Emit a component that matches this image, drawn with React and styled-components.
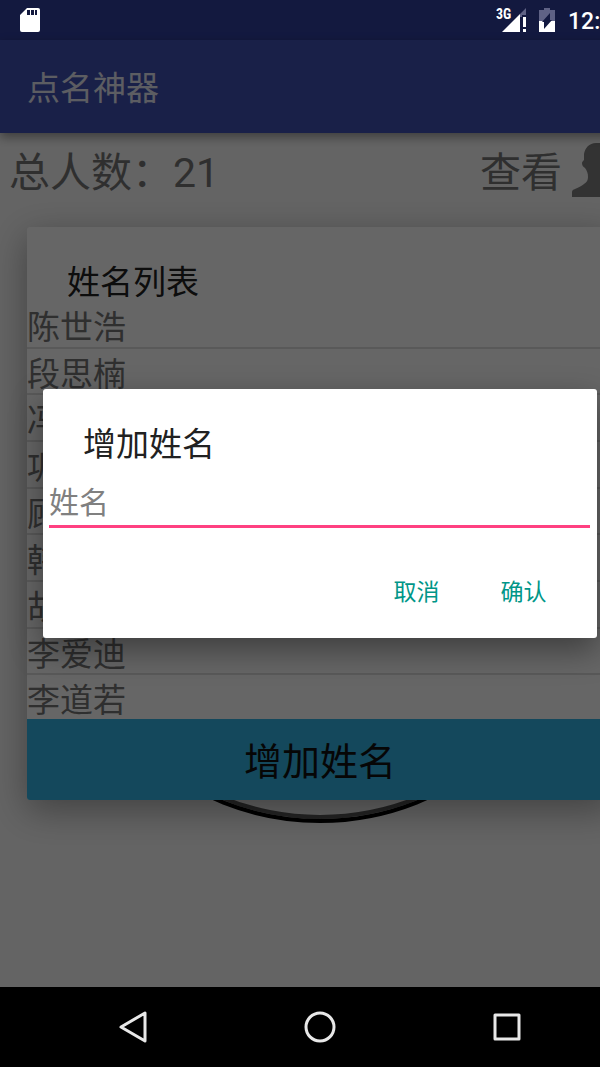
import React from 'react';
import styled, { createGlobalStyle } from 'styled-components';

const names = ['陈世浩', '段思楠', '冯', '巩', '顾', '韩', '胡', '李爱迪', '李道若'];

const App = () => {
  return (
    <Viewport>
      <GlobalStyle />
      <Screen>
        <Backdrop>
          <AppBar>
            <AppTitle>点名神器</AppTitle>
          </AppBar>
          <Main>
            <Summary>
              <span>总人数：21</span>
              <ViewButton type="button">
                <span>查看</span>
                <PersonIcon />
              </ViewButton>
            </Summary>
            <Dial aria-hidden="true" />
          </Main>
        </Backdrop>

        <Layer>
          <ListCard>
            <CardTitle>姓名列表</CardTitle>
            <ListWindow>
              <NameList>
                {names.map((name) => (
                  <NameRow key={name}>{name}</NameRow>
                ))}
              </NameList>
            </ListWindow>
            <AddButton type="button">增加姓名</AddButton>
          </ListCard>
        </Layer>

        <Scrim />

        <Layer>
          <Dialog role="dialog" aria-labelledby="dialog-title">
            <DialogTitle id="dialog-title">增加姓名</DialogTitle>
            <NameInput type="text" placeholder="姓名" aria-labelledby="dialog-title" />
            <Actions>
              <TextButton type="button">取消</TextButton>
              <TextButton type="button">确认</TextButton>
            </Actions>
          </Dialog>
        </Layer>

        <StatusBar>
          <SdCardIcon />
          <StatusIcons>
            <SignalIcon />
            <BatteryIcon />
            <Clock>12:</Clock>
          </StatusIcons>
        </StatusBar>

        <NavBar>
          <NavButton type="button">
            <svg width="36" height="36" viewBox="0 0 36 36" fill="none" stroke="#e8e8e8" strokeWidth="3" strokeLinejoin="round">
              <path d="M6 18 30 4v28z" />
            </svg>
          </NavButton>
          <NavButton type="button">
            <svg width="36" height="36" viewBox="0 0 36 36" fill="none" stroke="#e8e8e8" strokeWidth="3">
              <circle cx="18" cy="18" r="14" />
            </svg>
          </NavButton>
          <NavButton type="button">
            <svg width="36" height="36" viewBox="0 0 36 36" fill="none" stroke="#e8e8e8" strokeWidth="3" strokeLinejoin="round">
              <path d="M6 6h24v24H6z" />
            </svg>
          </NavButton>
        </NavBar>
      </Screen>
    </Viewport>
  );
};

const PersonIcon = () => (
  <svg width="58" height="54" viewBox="0 0 58 54" fill="#808080" aria-hidden="true">
    <path d="M0 54v-3c0-3 0-4 3-5 4-2 7-3 9-5 3-2 4-4 4-7 0-4-1-6-3-9-2-1-3-3-3-5 0-1 1-2 2-3V11C13 5 17 0 24 0h10c7 0 11 5 12 11v6c1 1 2 2 2 3 0 2-1 4-3 5-2 3-3 5-3 9 0 3 1 5 4 7 2 2 5 3 9 5 3 1 3 2 3 5v3z" />
  </svg>
);

const SdCardIcon = () => (
  <svg width="20" height="24" viewBox="0 0 20 24" aria-hidden="true">
    <path fill="#fff" fillRule="evenodd" d="M7 0h11a2 2 0 0 1 2 2v20a2 2 0 0 1-2 2H2a2 2 0 0 1-2-2V7zM7 2v5h3V2zM11 2v5h3V2zM15 2v5h2V2z" />
  </svg>
);

const SignalIcon = () => (
  <svg width="30" height="24" viewBox="0 0 30 24" aria-hidden="true">
    <path fill="#fff" d="M6 24 24 6v18z" />
    <path fill="#5f6285" d="M24 6l6-6v7h-4v2h-2z" />
    <path fill="#fff" d="M27 9h3v10h-3zM27 21h3v3h-3z" />
    <text x="0" y="11" fill="#fff" fontSize="14" fontWeight="700" fontFamily="'Roboto Condensed', Roboto, sans-serif">3G</text>
  </svg>
);

const BatteryIcon = () => (
  <svg width="16" height="24" viewBox="0 0 16 24" aria-hidden="true">
    <path fill="#5f6285" d="M5 0h6v2h5v12H0V2h5z" />
    <path fill="#fff" d="M0 13h16v11H0z" />
    <path fill="#131940" d="M11 5v7h2L5 21v-7H3z" />
  </svg>
);

const GlobalStyle = createGlobalStyle`
  * {
    box-sizing: border-box;
  }

  body {
    margin: 0;
    background: #000;
    font-family: Roboto, 'Noto Sans CJK SC', sans-serif;
  }

  button,
  input {
    margin: 0;
    padding: 0;
    border: 0;
    background: none;
    font-family: inherit;
  }

  svg {
    display: block;
    flex: none;
  }
`;

const Viewport = styled.div`
  overflow: hidden;
`;

/* the device screen runs a little past the right edge of the window */
const Screen = styled.div`
  position: relative;
  display: flex;
  flex-direction: column;
  width: calc(100% + 40px);
  min-height: 100vh;
`;

const Backdrop = styled.div`
  flex: 1;
  display: flex;
  flex-direction: column;
  padding-top: 40px;
  background: #303f9f;
`;

const AppBar = styled.header`
  position: relative;
  display: flex;
  align-items: center;
  height: 93px;
  padding: 4px 27px 0;
  background: #3f51b5;
  box-shadow: 0 4px 10px rgba(0, 0, 0, 0.4);
`;

const AppTitle = styled.h1`
  margin: 0;
  color: #fff;
  opacity: 0.87;
  font-size: 33px;
  line-height: 48px;
  font-weight: 400;
`;

const Main = styled.main`
  flex: 1;
  display: flex;
  flex-direction: column;
  align-items: center;
  background: #fafafa;
`;

const Summary = styled.div`
  display: flex;
  align-items: center;
  justify-content: space-between;
  align-self: stretch;
  height: 74px;
  padding: 0 10px 0 9px;
  color: #777;
  font-size: 41px;
  line-height: 60px;

  span {
    padding-top: 6px;
  }
`;

const ViewButton = styled.button`
  display: flex;
  align-items: center;
  gap: 10px;
  height: 74px;
  color: inherit;
  font-size: 41px;
  line-height: 60px;
`;

const Dial = styled.div`
  width: 528px;
  height: 528px;
  margin-top: 88px;
  border: 4px solid #000;
  border-radius: 50%;
  box-shadow: inset 0 0 0 4px #5a5a5a;
`;

/* area between the status bar and the navigation bar */
const Layer = styled.div`
  position: absolute;
  inset: 40px 0 80px;
  display: flex;
  align-items: center;
  justify-content: center;
`;

const Scrim = styled.div`
  position: absolute;
  inset: 0;
  background: rgba(0, 0, 0, 0.6);
`;

const ListCard = styled.section`
  flex: 1;
  margin: 0 27px;
  border-radius: 3px;
  overflow: hidden;
  background: #fff;
  box-shadow: 0 10px 36px rgba(0, 0, 0, 0.35);
`;

const CardTitle = styled.h2`
  margin: 0;
  padding: 32px 40px 0;
  height: 75px;
  color: #212121;
  font-size: 33px;
  line-height: 48px;
  font-weight: 400;
`;

const ListWindow = styled.div`
  height: 417px;
  overflow: hidden;
`;

const NameList = styled.ul`
  display: grid;
  grid-auto-rows: 1fr;
  height: 420px;
  margin: 0;
  padding: 0;
  list-style: none;
`;

const NameRow = styled.li`
  min-height: 0;
  border-bottom: 2px solid #dedede;
  color: #777;
  font-size: 33px;
  line-height: 52px;
`;

const AddButton = styled.button`
  display: block;
  width: 100%;
  height: 81px;
  padding-top: 4px;
  background: #33b5e5;
  color: #111;
  font-size: 38px;
  line-height: 56px;
`;

const Dialog = styled.section`
  flex: 1;
  margin: 0 43px;
  border-radius: 3px;
  background: #fff;
  box-shadow: 0 12px 32px rgba(0, 0, 0, 0.4);
`;

const DialogTitle = styled.h2`
  margin: 0;
  padding: 32px 40px 0;
  color: #212121;
  font-size: 33px;
  line-height: 48px;
  font-weight: 400;
`;

const NameInput = styled.input`
  display: block;
  width: calc(100% - 13px);
  height: 50px;
  margin: 9px 7px 0 6px;
  padding-top: 2px;
  border-bottom: 3px solid #ff4081;
  color: #212121;
  font-size: 30px;
  outline: none;

  &::placeholder {
    color: #808080;
    opacity: 1;
  }
`;

const Actions = styled.div`
  display: flex;
  justify-content: flex-end;
  padding: 32px 20px 18px;
`;

const TextButton = styled.button`
  width: 107px;
  height: 60px;
  color: #009688;
  font-size: 23px;
  font-weight: 400;
`;

const StatusBar = styled.div`
  position: absolute;
  inset: 0 0 auto;
  display: flex;
  align-items: center;
  justify-content: space-between;
  height: 40px;
  padding-left: 20px;
`;

const StatusIcons = styled.div`
  display: flex;
  align-items: center;
  gap: 13px;
`;

const Clock = styled.span`
  width: 72px;
  padding-top: 3px;
  color: #fff;
  font-size: 23px;
  line-height: 28px;
  font-weight: 500;
`;

const NavBar = styled.nav`
  position: relative;
  display: flex;
  align-items: center;
  justify-content: center;
  height: 80px;
  background: #000;
`;

const NavButton = styled.button`
  display: flex;
  align-items: center;
  justify-content: center;
  width: 187px;
  height: 80px;
`;

export default App;
